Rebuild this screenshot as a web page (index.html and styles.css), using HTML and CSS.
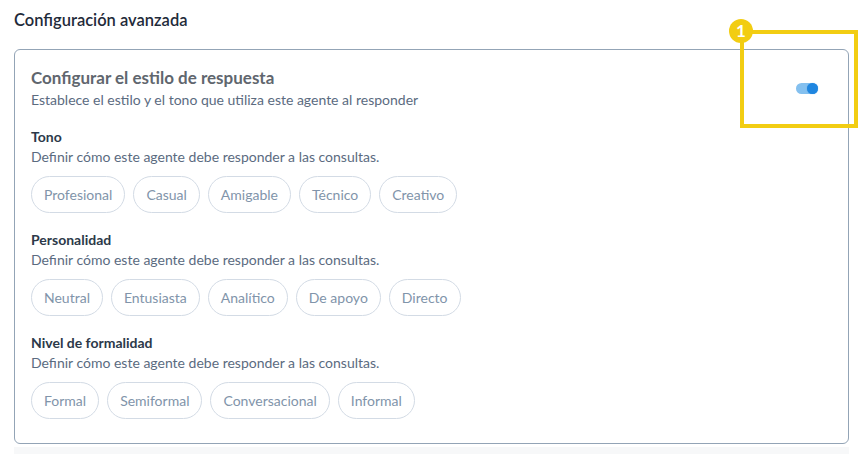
FILE: index.html
```html
<!DOCTYPE html>
<html lang="es">
<head>
  <meta charset="UTF-8">
  <meta name="viewport" content="width=device-width, initial-scale=1.0">
  <title>Configuración avanzada</title>
  <link rel="stylesheet" href="styles.css">
</head>
<body>
  <div class="page">
    <h3 class="page-title">Configuración avanzada</h3>

    <div class="card">
      <div class="card-head">
        <div>
          <h4 class="card-title">Configurar el estilo de respuesta</h4>
          <p class="card-sub">Establece el estilo y el tono que utiliza este agente al responder</p>
        </div>
        <label class="switch">
          <input type="checkbox" checked>
          <span class="track"><span class="knob"></span></span>
        </label>
      </div>

      <div class="group">
        <div class="group-title">Tono</div>
        <div class="group-desc">Definir cómo este agente debe responder a las consultas.</div>
        <div class="chips">
          <button class="chip">Profesional</button>
          <button class="chip">Casual</button>
          <button class="chip">Amigable</button>
          <button class="chip">Técnico</button>
          <button class="chip">Creativo</button>
        </div>
      </div>

      <div class="group">
        <div class="group-title">Personalidad</div>
        <div class="group-desc">Definir cómo este agente debe responder a las consultas.</div>
        <div class="chips">
          <button class="chip">Neutral</button>
          <button class="chip">Entusiasta</button>
          <button class="chip">Analítico</button>
          <button class="chip">De apoyo</button>
          <button class="chip">Directo</button>
        </div>
      </div>

      <div class="group">
        <div class="group-title">Nivel de formalidad</div>
        <div class="group-desc">Definir cómo este agente debe responder a las consultas.</div>
        <div class="chips">
          <button class="chip">Formal</button>
          <button class="chip">Semiformal</button>
          <button class="chip">Conversacional</button>
          <button class="chip">Informal</button>
        </div>
      </div>
    </div>

    <div class="next-section"></div>
  </div>

  <!-- highlight marker over the toggle -->
  <div class="marker">
    <span class="marker-num">1</span>
  </div>
</body>
</html>
```
FILE: styles.css
```css
body {
  font-family: Lato, "Liberation Sans", sans-serif;
  margin: 0;
  padding: 0;
  background: #ffffff;
}
.page {
  padding: 9px 12px 0 14px;
}
.page-title {
  margin: 0 0 18px;
  font-size: 16.5px;
  line-height: 22px;
  font-weight: 600;
  color: #1f2b3a;
}
.card {
  border: 1px solid #93a4b6;
  border-radius: 6px;
  padding: 17px 16px 24px;
}
.card-head {
  display: flex;
  justify-content: space-between;
  align-items: center;
}
.card-title {
  margin: 0;
  font-size: 17px;
  line-height: 22px;
  font-weight: 700;
  color: #60666e;
}
.card-sub {
  margin: 0;
  font-size: 14px;
  line-height: 21px;
  color: #5b6b7f;
}
.switch {
  margin-right: 14px;
  cursor: pointer;
}
.switch input {
  display: none;
}
.track {
  display: flex;
  align-items: center;
  justify-content: flex-end;
  width: 22px;
  height: 11px;
  border-radius: 6px;
  background: #84c0ef;
}
.knob {
  width: 11px;
  height: 11px;
  border-radius: 50%;
  background: #1f86e0;
  box-shadow: 0 0 1px rgba(31, 134, 224, 0.6);
}
.group {
  margin-top: 17px;
}
.group-title {
  font-size: 14px;
  line-height: 20px;
  font-weight: 700;
  color: #2c3949;
}
.group-desc {
  font-size: 14px;
  line-height: 20px;
  color: #5b6b7f;
}
.chips {
  display: flex;
  gap: 8px;
  margin-top: 9px;
}
.chip {
  font-family: inherit;
  font-size: 14px;
  line-height: 19px;
  padding: 8px 12px;
  border: 1px solid #d3dbe5;
  border-radius: 999px;
  background: #ffffff;
  color: #8194aa;
  cursor: pointer;
}
.chip:hover {
  border-color: #b7c4d3;
}
.next-section {
  margin-top: 3px;
  height: 20px;
  background: #f7f8f9;
}
.marker {
  position: absolute;
  left: 740px;
  top: 30px;
  width: 110px;
  height: 90px;
  border: 4px solid #f2cd12;
}
.marker-num {
  position: absolute;
  left: -15px;
  top: -15px;
  width: 24px;
  height: 24px;
  border-radius: 50%;
  background: #f2cd12;
  color: #ffffff;
  font-weight: 700;
  font-size: 17px;
  line-height: 24px;
  text-align: center;
}
```
